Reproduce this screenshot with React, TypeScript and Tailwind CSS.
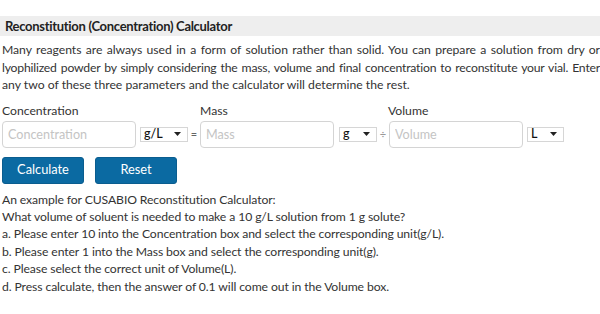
export default function App() {
  const font = { fontFamily: 'Lato, "Open Sans", sans-serif' };
  return (
    <div className="w-[600px] h-[314px] bg-white overflow-hidden pt-[16px] text-[12px] text-[#333]" style={font}>
      {/* Title bar */}
      <div className="h-[20px] bg-[#eeeeee] pl-[5px] text-[13px] font-bold leading-[20px] tracking-[-0.3px] text-[#222]">
        Reconstitution (Concentration) Calculator
      </div>

      <p className="mt-[5px] pl-[2px] text-[12.2px] leading-[17.5px]">
        <span className="block whitespace-nowrap text-justify tracking-[-0.05px] [text-align-last:justify]">
          Many reagents are always used in a form of solution rather than solid. You can prepare a solution from dry or
        </span>
        <span className="block whitespace-nowrap text-justify tracking-[-0.2px] [text-align-last:justify]">
          lyophilized powder by simply considering the mass, volume and final concentration to reconstitute your vial. Enter
        </span>
        <span className="block">
          any two of these three parameters and the calculator will determine the rest.
        </span>
      </p>

      {/* Labels */}
      <div className="mt-[8px] flex pl-[2px] text-[12.2px] leading-[17px]">
        <span className="w-[198px]">Concentration</span>
        <span className="w-[188px]">Mass</span>
        <span>Volume</span>
      </div>

      {/* Inputs */}
      <div className="mt-[2px] flex items-center pl-[2px]">
        <Field placeholder="Concentration" />
        <Unit label="g/L" width="w-[48px]" className="ml-[4px]" />
        <span className="w-[12px] text-center text-[11px] text-[#666]">=</span>
        <Field placeholder="Mass" />
        <Unit label="g" width="w-[38px]" className="ml-[5px]" />
        <span className="w-[12px] text-center text-[11px] text-[#999]">÷</span>
        <Field placeholder="Volume" />
        <Unit label="L" width="w-[37px]" className="ml-[4px]" />
      </div>

      {/* Buttons */}
      <div className="mt-[9px] flex gap-[11px] pl-[2px]">
        <button className="h-[27px] w-[82px] rounded-[3px] border border-[#0a5d8f] bg-[#0b6aa2] text-[12.8px] text-white">
          Calculate
        </button>
        <button className="h-[27px] w-[82px] rounded-[3px] border border-[#0a5d8f] bg-[#0b6aa2] text-[12.8px] text-white">
          Reset
        </button>
      </div>

      {/* Example */}
      <div className="mt-[7px] pl-[2px] text-[12.2px] leading-[17.4px] tracking-[-0.1px] text-[#333]">
        <p>An example for CUSABIO Reconstitution Calculator:</p>
        <p>What volume of soluent is needed to make a 10 g/L solution from 1 g solute?</p>
        <p>a. Please enter 10 into the Concentration box and select the corresponding unit(g/L).</p>
        <p>b. Please enter 1 into the Mass box and select the corresponding unit(g).</p>
        <p>c. Please select the correct unit of Volume(L).</p>
        <p>d. Press calculate, then the answer of 0.1 will come out in the Volume box.</p>
      </div>
    </div>
  );
}

function Field({ placeholder }: { placeholder: string }) {
  return (
    <input
      placeholder={placeholder}
      className="h-[27px] w-[134px] rounded-[4px] border border-[#d4d4d4] px-[5px] text-[12.6px] placeholder:text-[#c4c4c4] outline-none"
    />
  );
}

function Unit({ label, width, className }: { label: string; width: string; className?: string }) {
  return (
    <div
      className={`flex h-[15px] items-center justify-between border border-[#d6d6d6] pl-[3px] pr-[6px] text-[12.5px] font-medium leading-none text-[#111] ${width} ${className ?? ''}`}
    >
      <span>{label}</span>
      <svg width="7" height="4" viewBox="0 0 7 4">
        <path d="M0 0h7L3.5 4z" fill="#222" />
      </svg>
    </div>
  );
}
